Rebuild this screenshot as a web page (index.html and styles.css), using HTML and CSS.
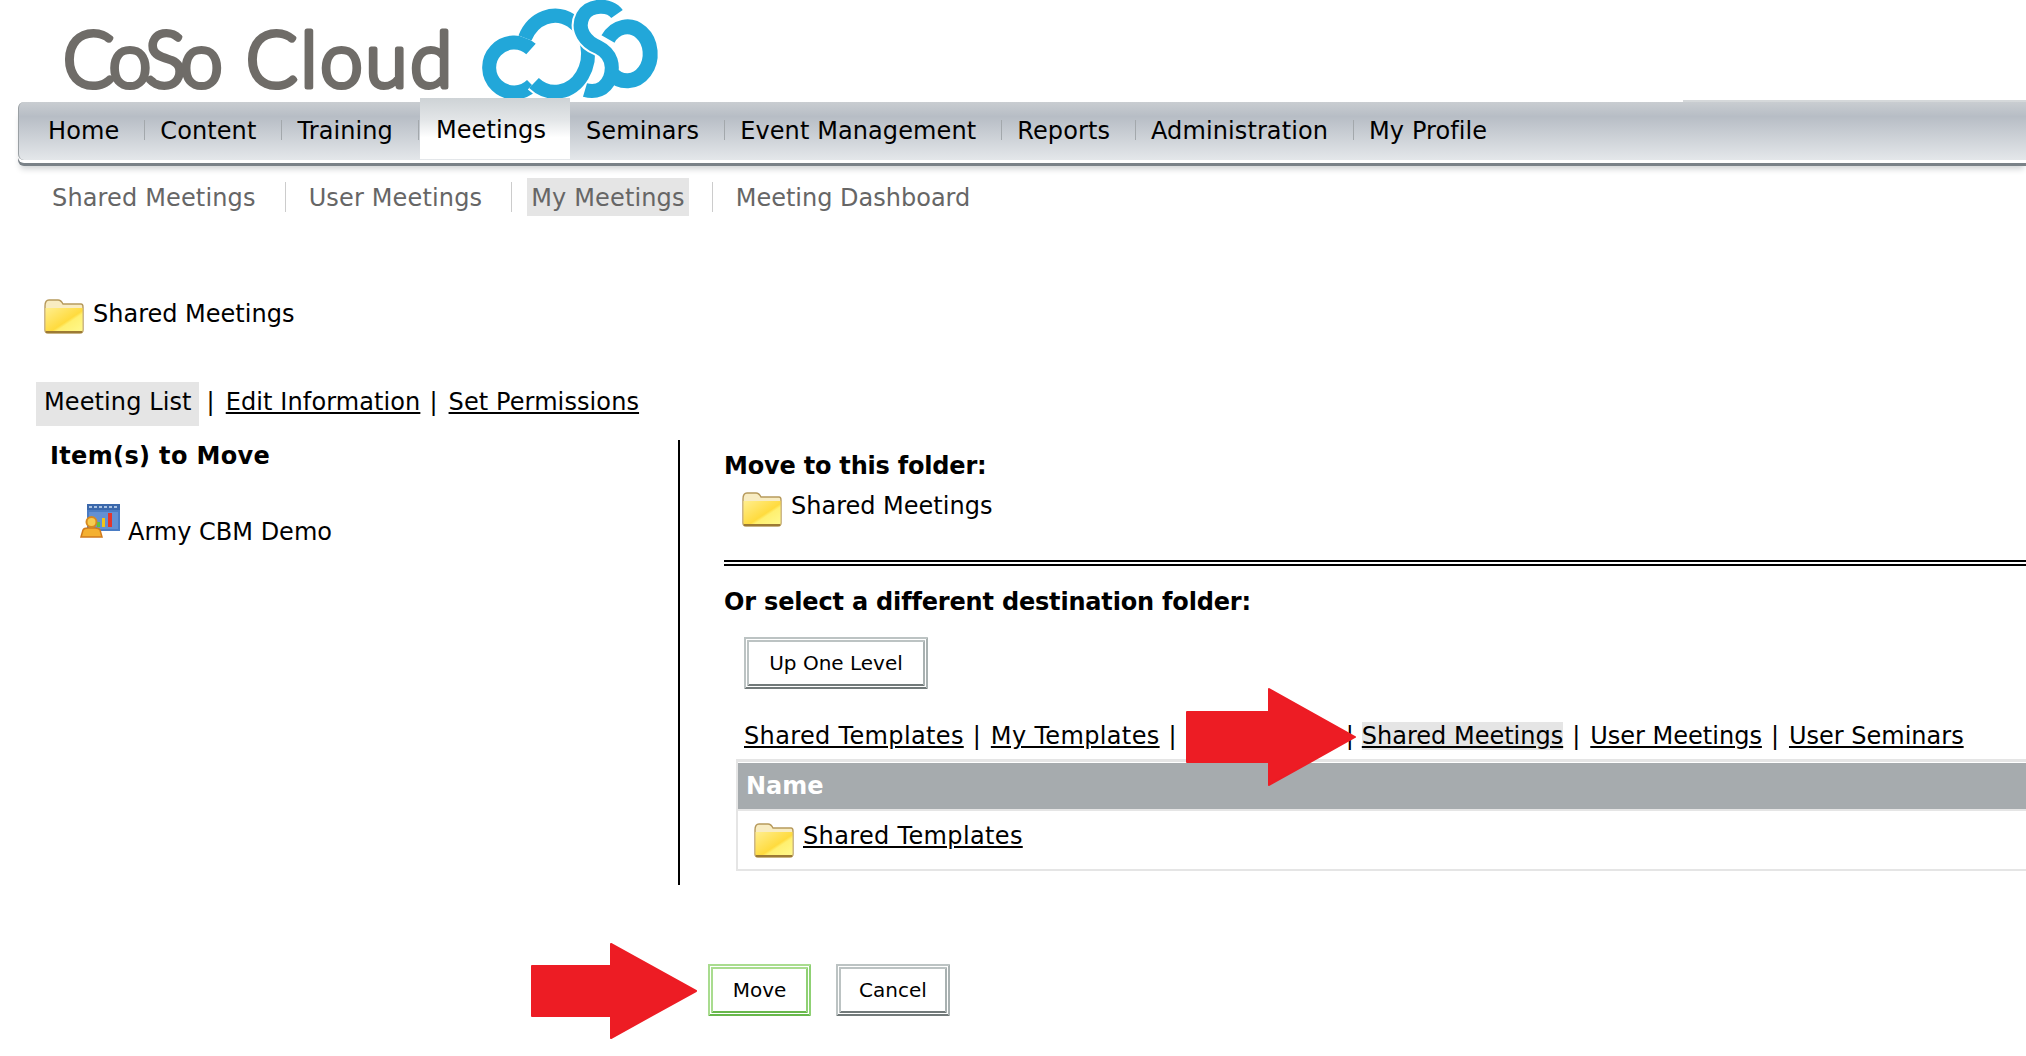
FILE: index.html
```html
<!DOCTYPE html>
<html lang="en">
<head>
    <meta charset="UTF-8">
    <meta name="viewport" content="width=device-width, initial-scale=1.0">
    <title>CoSo Cloud - Move Meeting</title>
    <link rel="stylesheet" href="styles.css">
</head>
<body>
    <svg width="0" height="0" class="defs">
        <defs>
            <linearGradient id="folderFill" x1="0" y1="0" x2="1" y2="1">
                <stop offset="0" stop-color="#ffee8e"/>
                <stop offset="0.55" stop-color="#ffdb3e"/>
                <stop offset="0.62" stop-color="#fff070"/>
                <stop offset="1" stop-color="#fff98e"/>
            </linearGradient>
            <symbol id="folder" viewBox="0 0 40 35">
                <path d="M1 7 Q1 1 5 1 H14 Q17 1 19 5 H37 Q39 5 39 8 V31 Q39 34 36 34 H4 Q1 34 1 31 Z" fill="#f8ecc2" stroke="#b79a5c" stroke-width="1.4"/>
                <path d="M1.500 9 H38.500 V31 Q38.500 33.500 36 33.500 H4 Q1.500 33.500 1.500 31 Z" fill="url(#folderFill)"/>
                <path d="M2 33 H38" stroke="#9c7a34" stroke-width="2"/>
            </symbol>
        </defs>
    </svg>

    <div class="header">
        <svg class="logo" width="660" height="102" viewBox="0 0 660 102">
            <text y="87" class="logo-text"><tspan x="63" class="logo-coso">CoSo</tspan><tspan x="246" class="logo-word">Cloud</tspan></text>
            <g class="logo-cloud">
                <path d="M531 49 A25 25 0 1 0 532 85"/>
                <path class="halo" d="M525 38 A33 38 0 1 1 534 83"/>
                <path d="M525 38 A33 38 0 1 1 534 83"/>
                <path class="halo" d="M617 14 C610 4 590 4 583 16 C576 30 586 42 598 47 C612 54 614 66 610 78 C605 90 595 93 585 90"/>
                <path d="M617 14 C610 4 590 4 583 16 C576 30 586 42 598 47 C612 54 614 66 610 78 C605 90 595 93 585 90"/>
                <path d="M608 39 A23 27 0 1 1 611 73" class="logo-ring"/>
            </g>
        </svg>
    </div>

    <div class="nav">
        <a class="nav-item">Home</a>
        <a class="nav-item">Content</a>
        <a class="nav-item">Training</a>
        <a class="nav-item active">Meetings</a>
        <a class="nav-item">Seminars</a>
        <a class="nav-item">Event Management</a>
        <a class="nav-item">Reports</a>
        <a class="nav-item">Administration</a>
        <a class="nav-item last">My Profile</a>
    </div>

    <div class="subnav">
        <a class="subnav-item">Shared Meetings</a>
        <a class="subnav-item">User Meetings</a>
        <a class="subnav-item current">My Meetings</a>
        <a class="subnav-item last">Meeting Dashboard</a>
    </div>

    <div class="folder-title">
        <svg class="folder-icon"><use href="#folder"/></svg>
        <span>Shared Meetings</span>
    </div>

    <div class="tabs">
        <span class="tab-current">Meeting List</span>
        <span class="pipe first">|</span>
        <a class="link">Edit Information</a>
        <span class="pipe">|</span>
        <a class="link">Set Permissions</a>
    </div>

    <div class="columns">
        <div class="col-left">
            <h3 class="items-title">Item(s) to Move</h3>
            <div class="item-row">
                <svg class="item-icon" width="40" height="34" viewBox="0 0 40 34">
                    <rect x="7" y="0" width="33" height="27" fill="#4a7cc4"/>
                    <rect x="7" y="0" width="33" height="6" fill="#3b68ab"/>
                    <path d="M9 3 H38" stroke="#cfe0f5" stroke-width="1.500" stroke-dasharray="3 2"/>
                    <rect x="9" y="8" width="29" height="17" fill="#6390d2"/>
                    <rect x="17" y="18" width="3" height="5" fill="#5fc23c"/>
                    <rect x="22" y="14" width="3" height="9" fill="#f0c419"/>
                    <rect x="28" y="9" width="4" height="14" fill="#e4352b"/>
                    <path d="M1 33 L3 26 Q4 24 8 24 H15 Q19 24 20 26 L22 33 Z" fill="#f4b030" stroke="#d07a1c" stroke-width="1.500"/>
                    <circle cx="11.500" cy="18" r="5" fill="#f7cc50" stroke="#d8891f" stroke-width="2"/>
                </svg>
                <span class="item-name">Army CBM Demo</span>
            </div>
        </div>

        <div class="col-right">
            <h3 class="move-title">Move to this folder:</h3>
            <div class="move-target">
                <svg class="folder-icon"><use href="#folder"/></svg>
                <span>Shared Meetings</span>
            </div>
            <div class="double-rule"></div>
            <h3 class="select-title">Or select a different destination folder:</h3>
            <button class="btn up-btn">Up One Level</button>

            <div class="folder-links">
                <a class="link templates">Shared Templates</a>
                <span class="pipe">|</span>
                <a class="link templates">My Templates</a>
                <span class="pipe">|</span>
                <span class="covered"></span>
                <span class="pipe">|</span>
                <a class="link picked">Shared Meetings</a>
                <span class="pipe">|</span>
                <a class="link">User Meetings</a>
                <span class="pipe">|</span>
                <a class="link">User Seminars</a>
            </div>

            <div class="folder-table">
                <div class="table-head">Name</div>
                <div class="table-row">
                    <svg class="folder-icon"><use href="#folder"/></svg>
                    <a class="link templates">Shared Templates</a>
                </div>
            </div>
        </div>
    </div>

    <div class="actions">
        <button class="btn move-btn">Move</button>
        <button class="btn cancel-btn">Cancel</button>
    </div>

    <!-- annotations on top of the screenshot -->
    <svg class="arrow arrow-links" width="172" height="100" viewBox="0 0 172 100"><path d="M2 25 H84 V2 L170 50 L84 98 V75 H2 Z" fill="#ed1c24" stroke="#ed1c24" stroke-width="2" stroke-linejoin="round"/></svg>
    <svg class="arrow arrow-move" width="168" height="98" viewBox="0 0 168 98"><path d="M2 24 H81 V2 L166 49 L81 96 V74 H2 Z" fill="#ed1c24" stroke="#ed1c24" stroke-width="2" stroke-linejoin="round"/></svg>
</body>
</html>
```

FILE: styles.css
```css
html, body {
    height: 100%;
}
body {
    margin: 0;
    font-family: "DejaVu Sans", Verdana, sans-serif;
    font-size: 24px;
    color: #000;
    background-color: #fff;
    overflow: hidden;
    position: relative;
}
.defs {
    position: absolute;
}
h3 {
    margin: 0;
    font-size: 24px;
    font-weight: bold;
}

/* logo */
.header {
    height: 102px;
}
.logo {
    display: block;
    overflow: visible;
}
.logo-text {
    font-family: Lato, sans-serif;
    font-weight: 300;
    font-size: 76px;
    fill: #6f6c68;
    stroke: #6f6c68;
    stroke-width: 5px;
    stroke-linejoin: round;
}
.logo-coso {
    letter-spacing: -5px;
}
.logo-word {
    letter-spacing: 3px;
}
.logo-cloud path {
    fill: none;
    stroke: #22a7d9;
    stroke-width: 14px;
}
.logo-cloud .halo {
    stroke: #fff;
    stroke-width: 18px;
}
.logo-cloud .logo-ring {
    stroke-width: 15px;
}

/* main nav */
.nav {
    position: relative;
    display: flex;
    align-items: center;
    height: 58px;
    margin-left: 18px;
    padding-left: 14px;
    border-radius: 6px 0 0 6px;
    background: linear-gradient(#c9cdd1, #b7bdc5 25%, #e4e7ea 100%);
    border-left: 1px solid #9aa0a4;
    box-shadow: 0 3px 0 #fff, 0 6px 0 #7a8288, 0 11px 6px -2px #d0d3d5;
}
.nav::after {
    content: "";
    position: absolute;
    left: 1664px;
    right: 0;
    top: -2px;
    height: 2px;
    background-color: #d5d8da;
}
.nav-item {
    position: relative;
    padding: 0 26px 0 15px;
    font-size: 24px;
    letter-spacing: 0.1px;
    line-height: 54px;
}
.nav-item::after {
    content: "";
    position: absolute;
    right: 0;
    top: 16px;
    height: 20px;
    border-right: 1px solid #a3a8ac;
}
.nav-item.last::after, .nav-item.active::after {
    display: none;
}
.nav-item.active {
    align-self: flex-start;
    margin: -4px 1px 0;
    height: 61px;
    line-height: 64px;
    padding: 0 24px 0 16px;
    background: linear-gradient(#ced3d6, #e2e5e7 35%, #fff 65%);
}

/* sub nav */
.subnav {
    display: flex;
    align-items: flex-start;
    height: 38px;
    margin-top: 18px;
    padding-left: 52px;
    color: #666;
}
.subnav-item {
    position: relative;
    height: 38px;
    padding: 0 30px 0 0;
    margin-right: 23px;
    line-height: 40px;
    letter-spacing: 0.15px;
}
.subnav-item:nth-child(2) {
    margin-right: 15px;
}
.subnav-item::after {
    content: "";
    position: absolute;
    right: 0;
    top: 4px;
    height: 30px;
    border-right: 1px solid #ccc;
}
.subnav-item.last::after {
    display: none;
}
.subnav-item.last {
    letter-spacing: 0;
}
.subnav-item.current {
    background-color: #e5e5e5;
    padding: 0 4px;
    margin-right: 47px;
}
.subnav-item.current::after {
    right: -24px;
}

/* folder heading */
.folder-icon {
    width: 40px;
    height: 35px;
    flex: none;
}
.folder-title {
    display: flex;
    align-items: flex-start;
    gap: 9px;
    margin: 83px 0 0 44px;
    height: 35px;
    line-height: 30px;
}

/* tabs */
.tabs {
    display: flex;
    align-items: flex-start;
    height: 44px;
    margin: 48px 0 0 36px;
    line-height: 40px;
    letter-spacing: 0.1px;
}
.tab-current {
    background-color: #e5e5e5;
    padding: 0 7px 0 8px;
    height: 44px;
}
.pipe {
    margin: 0 11px 0 9px;
}
.pipe.first {
    margin-left: 8px;
}
.link {
    color: #000;
    text-decoration: underline;
}

/* two columns */
.columns {
    display: flex;
    margin-top: 14px;
}
.col-left {
    width: 628px;
    height: 444px;
    padding: 1px 0 0 50px;
    border-right: 2px solid #000;
    flex: none;
}
.items-title {
    line-height: 30px;
    letter-spacing: 0.35px;
}
.item-row {
    display: flex;
    align-items: flex-start;
    margin: 33px 0 0 30px;
    gap: 8px;
    line-height: 32px;
}
.item-name {
    margin-top: 12px;
}
.col-right {
    flex: 1;
    min-width: 0;
    padding: 11px 0 0 44px;
}
.move-title {
    line-height: 30px;
    letter-spacing: -0.2px;
}
.move-target {
    display: flex;
    align-items: flex-start;
    gap: 9px;
    margin: 11px 0 0 18px;
    line-height: 28px;
}
.double-rule {
    height: 2px;
    margin-top: 33px;
    border-top: 2px solid #000;
    border-bottom: 2px solid #000;
}
.select-title {
    margin-top: 21px;
    line-height: 30px;
    letter-spacing: -0.18px;
}
.btn {
    display: block;
    height: 52px;
    padding: 0;
    font-family: "DejaVu Sans", Verdana, sans-serif;
    font-size: 20px;
    color: #000;
    background-color: #fff;
    border: 5px double #bcc3c3;
    border-bottom-color: #727a7a;
    border-right-color: #a9b1b1;
}
.up-btn {
    width: 184px;
    margin: 20px 0 0 20px;
}
.folder-links {
    display: flex;
    align-items: center;
    height: 30px;
    margin: 32px 0 0 20px;
    white-space: nowrap;
}
.folder-links .pipe {
    margin: 0 10px 0 9px;
}
.templates {
    letter-spacing: 0.35px;
}
.picked {
    background-color: #e5e5e5;
    margin-left: -2px;
}
.covered {
    width: 150px;
}
.folder-table {
    margin: 8px 0 0 12px;
    border-top: 3px solid #e5e5e5;
    border-left: 2px solid #e5e5e5;
    border-bottom: 2px solid #e5e5e5;
}
.table-head {
    margin-top: 1px;
    height: 46px;
    padding-left: 8px;
    line-height: 46px;
    font-weight: bold;
    color: #fff;
    background-color: #a6abae;
    border-bottom: 2px solid #e5e5e5;
}
.table-row {
    display: flex;
    align-items: flex-start;
    gap: 9px;
    height: 58px;
    padding: 12px 0 0 16px;
    box-sizing: border-box;
    line-height: 26px;
}

/* bottom buttons */
.actions {
    display: flex;
    gap: 25px;
    margin: 79px 0 0 708px;
}
.move-btn {
    width: 103px;
    border-color: #a9dc8f;
    border-bottom-color: #68b84c;
    border-right-color: #8fd174;
}
.cancel-btn {
    width: 114px;
}

/* red arrows drawn over the page */
.arrow {
    position: absolute;
}
.arrow-links {
    left: 1185px;
    top: 687px;
}
.arrow-move {
    left: 530px;
    top: 942px;
}
```
